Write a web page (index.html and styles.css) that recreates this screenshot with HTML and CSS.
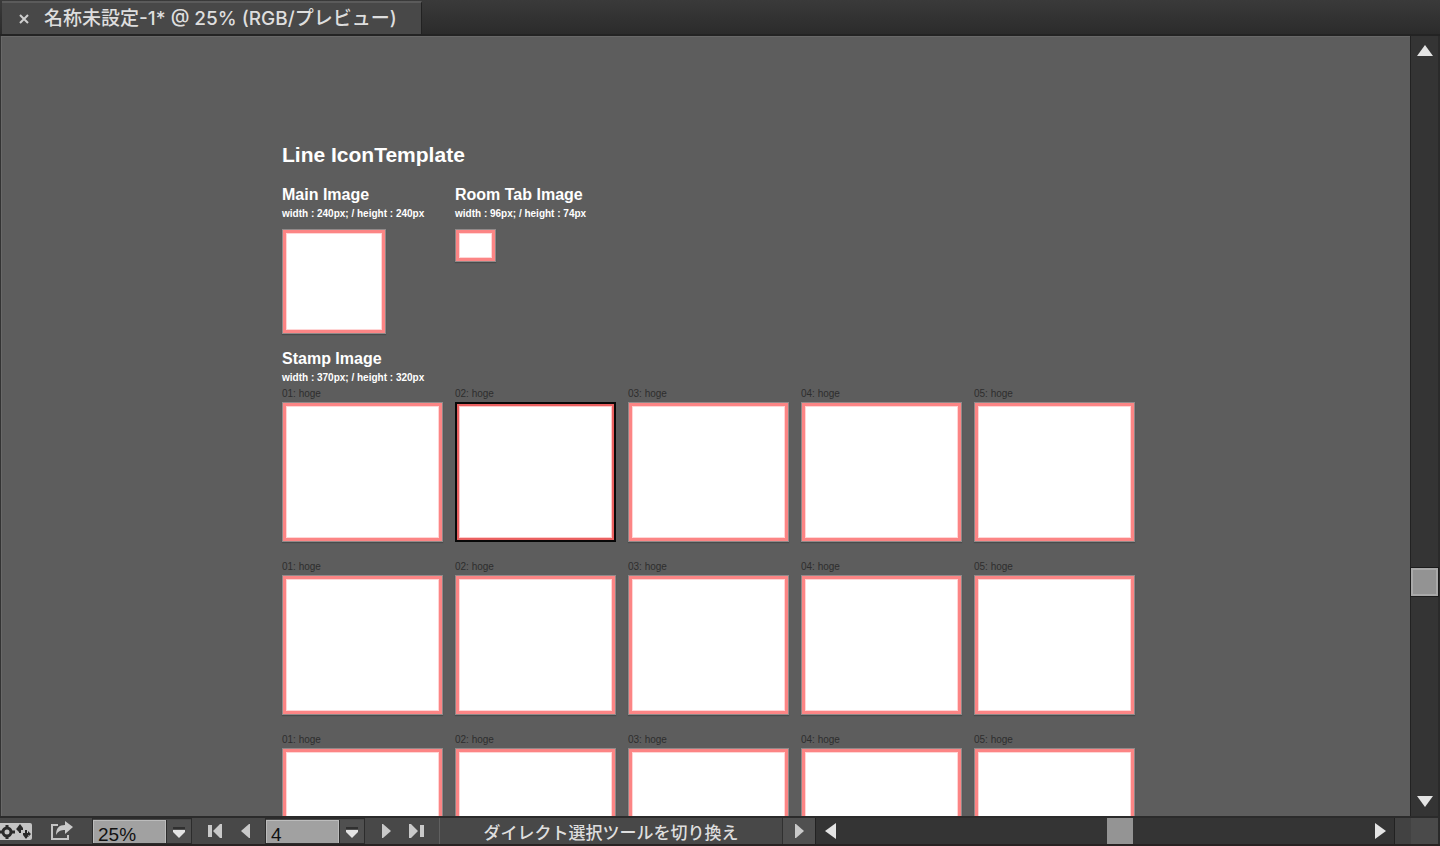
FILE: index.html
```html
<!DOCTYPE html>
<html lang="ja">
<head>
<meta charset="utf-8">
<title>名称未設定-1</title>
<link rel="stylesheet" href="styles.css">
</head>
<body>
<div class="window">
  <header class="tabs">
    <div class="tab">
      <button class="close" aria-label="閉じる"><svg width="10" height="10" viewBox="0 0 10 10"><path d="M1 1l8 8M9 1L1 9" stroke="#cfcfcf" stroke-width="2"/></svg></button>
      <span class="tab-title">名称未設定-1* @ 25% (RGB/プレビュー)</span>
    </div>
  </header>
  <div class="work">
    <main class="canvas">
      <h1 class="title">Line IconTemplate</h1>
      <div class="specs">
        <section class="spec">
          <h2 class="heading">Main Image</h2>
          <p class="size">width : 240px; / height : 240px</p>
          <div class="board main-board"></div>
        </section>
        <section class="spec">
          <h2 class="heading">Room Tab Image</h2>
          <p class="size">width : 96px; / height : 74px</p>
          <div class="board room-board"></div>
        </section>
      </div>
      <section class="stamps">
        <h2 class="heading">Stamp Image</h2>
        <p class="size">width : 370px; / height : 320px</p>
        <div class="grid">
          <div class="stamp"><span class="label">01: hoge</span><div class="board"></div></div>
          <div class="stamp"><span class="label">02: hoge</span><div class="board active"></div></div>
          <div class="stamp"><span class="label">03: hoge</span><div class="board"></div></div>
          <div class="stamp"><span class="label">04: hoge</span><div class="board"></div></div>
          <div class="stamp"><span class="label">05: hoge</span><div class="board"></div></div>
          <div class="stamp"><span class="label">01: hoge</span><div class="board"></div></div>
          <div class="stamp"><span class="label">02: hoge</span><div class="board"></div></div>
          <div class="stamp"><span class="label">03: hoge</span><div class="board"></div></div>
          <div class="stamp"><span class="label">04: hoge</span><div class="board"></div></div>
          <div class="stamp"><span class="label">05: hoge</span><div class="board"></div></div>
          <div class="stamp"><span class="label">01: hoge</span><div class="board"></div></div>
          <div class="stamp"><span class="label">02: hoge</span><div class="board"></div></div>
          <div class="stamp"><span class="label">03: hoge</span><div class="board"></div></div>
          <div class="stamp"><span class="label">04: hoge</span><div class="board"></div></div>
          <div class="stamp"><span class="label">05: hoge</span><div class="board"></div></div>
        </div>
      </section>
    </main>
    <div class="vscroll">
      <button class="v-arrow" aria-label="上へ"><svg width="16" height="12" viewBox="0 0 16 12"><path d="M8 0l8 11H0z" fill="#e4e4e4"/></svg></button>
      <div class="v-track"><div class="v-thumb"></div></div>
      <button class="v-arrow" aria-label="下へ"><svg width="16" height="12" viewBox="0 0 16 12"><path d="M0 1h16L8 12z" fill="#e4e4e4"/></svg></button>
    </div>
  </div>
  <footer class="status">
    <button class="tool bridge" aria-label="Bridge"><svg width="32" height="18" viewBox="0 0 32 18"><rect x="-3" y="1" width="35" height="17" rx="2" fill="#c4c4c4"/><circle cx="7" cy="10" r="4" fill="none" stroke="#292929" stroke-width="3"/><path d="M7 3v3M7 14v3M0 10h3M11 10h4" stroke="#292929" stroke-width="3"/><path d="M20 4v7M17 7h6M26 8v8M23 12h7" stroke="#292929" stroke-width="2"/><path d="M20 2l3 4h-6zM16 7l3-3v6zM31 12l-3-3v6zM26 17l-3-4h6z" fill="#292929"/></svg></button>
    <button class="tool share" aria-label="共有"><svg width="24" height="20" viewBox="0 0 24 20"><path d="M8 4H2v14h16v-4" fill="none" stroke="#c4c4c4" stroke-width="2"/><path d="M6 14c0-7 3-10 9-10V0l8 6-8 7V9c-4 0-7 1-9 5z" fill="#c9c9c9"/></svg></button>
    <div class="combo">
      <input class="field" type="text" value="25%" aria-label="ズーム">
      <button class="drop" aria-label="ズームの一覧"><svg width="12" height="12" viewBox="0 0 12 12"><path d="M0 2h12" stroke="#303030" stroke-width="2"/><path d="M0 4h12v2l-6 6-6-6z" fill="#e4e4e4"/></svg></button>
    </div>
    <button class="tool first" aria-label="最初"><svg width="16" height="14" viewBox="0 0 16 14"><path d="M0 1h4v12H0zM14 0v14h-2L5 7l7-7z" fill="#c9c9c9"/></svg></button>
    <button class="tool prev" aria-label="前へ"><svg width="16" height="14" viewBox="0 0 16 14"><path d="M9 0v14H8L0 7l8-7z" fill="#c9c9c9"/></svg></button>
    <div class="combo">
      <input class="field" type="text" value="4" aria-label="アートボード">
      <button class="drop" aria-label="アートボードの一覧"><svg width="12" height="12" viewBox="0 0 12 12"><path d="M0 2h12" stroke="#303030" stroke-width="2"/><path d="M0 4h12v2l-6 6-6-6z" fill="#e4e4e4"/></svg></button>
    </div>
    <button class="tool next" aria-label="次へ"><svg width="16" height="14" viewBox="0 0 16 14"><path d="M1 0v14h1l8-7-8-7z" fill="#c9c9c9"/></svg></button>
    <button class="tool last" aria-label="最後"><svg width="16" height="14" viewBox="0 0 16 14"><path d="M0 0v14h2l7-7-7-7zM11 1h4v12h-4z" fill="#c9c9c9"/></svg></button>
    <div class="message">ダイレクト選択ツールを切り換え</div>
    <button class="more" aria-label="表示"><svg width="16" height="14" viewBox="0 0 16 14"><path d="M4 0v14h1l8-7-8-7z" fill="#c9c9c9"/></svg></button>
    <div class="hscroll">
      <button class="h-arrow" aria-label="左へ"><svg width="12" height="16" viewBox="0 0 12 16"><path d="M11 0v16L0 8z" fill="#e4e4e4"/></svg></button>
      <div class="h-track"><div class="h-thumb"></div></div>
      <button class="h-arrow" aria-label="右へ"><svg width="12" height="16" viewBox="0 0 12 16"><path d="M1 0v16l11-8z" fill="#e4e4e4"/></svg></button>
    </div>
    <div class="corner"></div>
  </footer>
</div>
</body>
</html>
```
FILE: styles.css
```css
* {
  box-sizing: border-box;
}

body {
  margin: 0;
  font-family: "Liberation Sans", "Noto Sans CJK JP", sans-serif;
}

button {
  display: flex;
  align-items: center;
  justify-content: center;
  flex: none;
  padding: 0;
  border: 0;
  background: none;
}

h1,
h2,
p {
  margin: 0;
}

.window {
  display: flex;
  flex-direction: column;
  height: 100vh;
  overflow: hidden;
  background: #5d5d5d;
}

.tabs {
  display: flex;
  flex: none;
  height: 36px;
  padding: 1px 2px 0;
  border-bottom: 2px solid #232323;
  background: linear-gradient(#3a3a3a, #2b2b2b);
}

.tab {
  display: flex;
  align-items: center;
  gap: 15px;
  padding: 0 24px 0 16px;
  border-top: 2px solid #5b5b5b;
  border-right: 1px solid #222;
  background: #484848;
}

.close {
  width: 11px;
  height: 22px;
}

.tab-title {
  color: #dedede;
  font-family: Inter, "Noto Sans CJK JP", sans-serif;
  font-size: 19px;
  font-weight: 500;
  line-height: 28px;
  white-space: nowrap;
}

.work {
  display: flex;
  flex: 1;
  min-height: 0;
  border-right: 2px solid #2a2a2a;
  border-left: 1px solid #333;
}

.canvas {
  flex: 1;
  min-width: 0;
  overflow: hidden;
  padding: 104px 0 0 280px;
  border-top: 1px solid #686868;
  border-left: 1px solid #686868;
  background: #5d5d5d;
  color: #fff;
}

.title {
  font-size: 21px;
  line-height: 28px;
}

.specs {
  display: flex;
  gap: 12px;
  height: 164px;
  margin-top: 16px;
}

.spec {
  width: 161px;
}

.heading {
  font-size: 16px;
  line-height: 20px;
  white-space: nowrap;
}

.size {
  font-size: 10px;
  font-weight: 700;
  line-height: 18px;
  white-space: nowrap;
}

.grid {
  display: grid;
  grid-template-columns: repeat(5, 161px);
  gap: 18px 12px;
}

.label {
  display: block;
  padding-bottom: 1px;
  color: #2e2e2e;
  font-size: 10px;
  line-height: 14px;
}

.board {
  height: 140px;
  border: 1px solid #918989;
  background: #fff;
  box-shadow: inset 0 0 0 3px #fc8585, inset 0 0 0 4px #ffd6d6, 0 1px 1px #484c4c;
}

.active {
  border: 2px solid #080808;
  box-shadow: inset 0 0 0 2px #e96060, inset 0 0 0 3px #ffcaca;
}

.main-board {
  width: 104px;
  height: 105px;
  margin-top: 6px;
}

.room-board {
  width: 41px;
  height: 33px;
  margin-top: 6px;
}

.vscroll {
  display: flex;
  flex-direction: column;
  flex: none;
  width: 28px;
  border-left: 1px solid #222;
  background: #343434;
}

.v-arrow {
  width: 27px;
  height: 30px;
}

.v-track {
  display: grid;
  flex: 1;
  grid-template-rows: 503fr 28px 191fr;
}

.v-thumb {
  grid-row: 2;
  border: 2px solid #a9a9a9;
  background: #939393;
  outline: 1px solid #1c1c1c;
}

.status {
  display: flex;
  flex: none;
  height: 30px;
  border-top: 2px solid #2b2b2b;
  border-bottom: 2px solid #282222;
  background: #484848;
}

.tool {
  width: 32px;
}

.share {
  width: 24px;
  margin: 0 18px;
}

.combo {
  display: flex;
  flex: none;
  width: 100px;
  padding-top: 1px;
  border: 1px solid #2c2c2c;
}

.field {
  width: 73px;
  min-width: 0;
  padding: 6px 4px 0;
  border: 1px solid #bcbcbc;
  border-bottom: 0;
  border-radius: 0;
  background: #a1a1a1;
  color: #111;
  font-family: "Liberation Sans", sans-serif;
  font-size: 19px;
}

.drop {
  flex: 1;
  border-left: 1px solid #2c2c2c;
  background: #505050;
}

.first {
  margin-left: 8px;
}

.prev {
  width: 33px;
}

.next {
  margin-left: 8px;
}

.last {
  width: 24px;
  margin-right: 10px;
}

.message {
  flex: none;
  width: 344px;
  padding-top: 3px;
  border-right: 1px solid #303030;
  border-left: 1px solid #606060;
  color: #dedede;
  font-size: 17px;
  font-weight: 500;
  line-height: 26px;
  text-align: center;
  white-space: nowrap;
}

.more {
  width: 32px;
  background: #505050;
}

.hscroll {
  display: flex;
  flex: 1;
  min-width: 0;
  border: solid #222;
  border-width: 0 1px;
  background: #343434;
}

.h-arrow {
  width: 29px;
}

.h-track {
  display: grid;
  flex: 1;
  grid-template-columns: 261fr 26px 232fr;
}

.h-thumb {
  grid-column: 2;
  background: #949494;
}

.corner {
  flex: none;
  width: 45px;
  border-right: 2px solid #2a2a2a;
  background: linear-gradient(90deg, #424242 16px, #4a4a4a 16px);
}
```
